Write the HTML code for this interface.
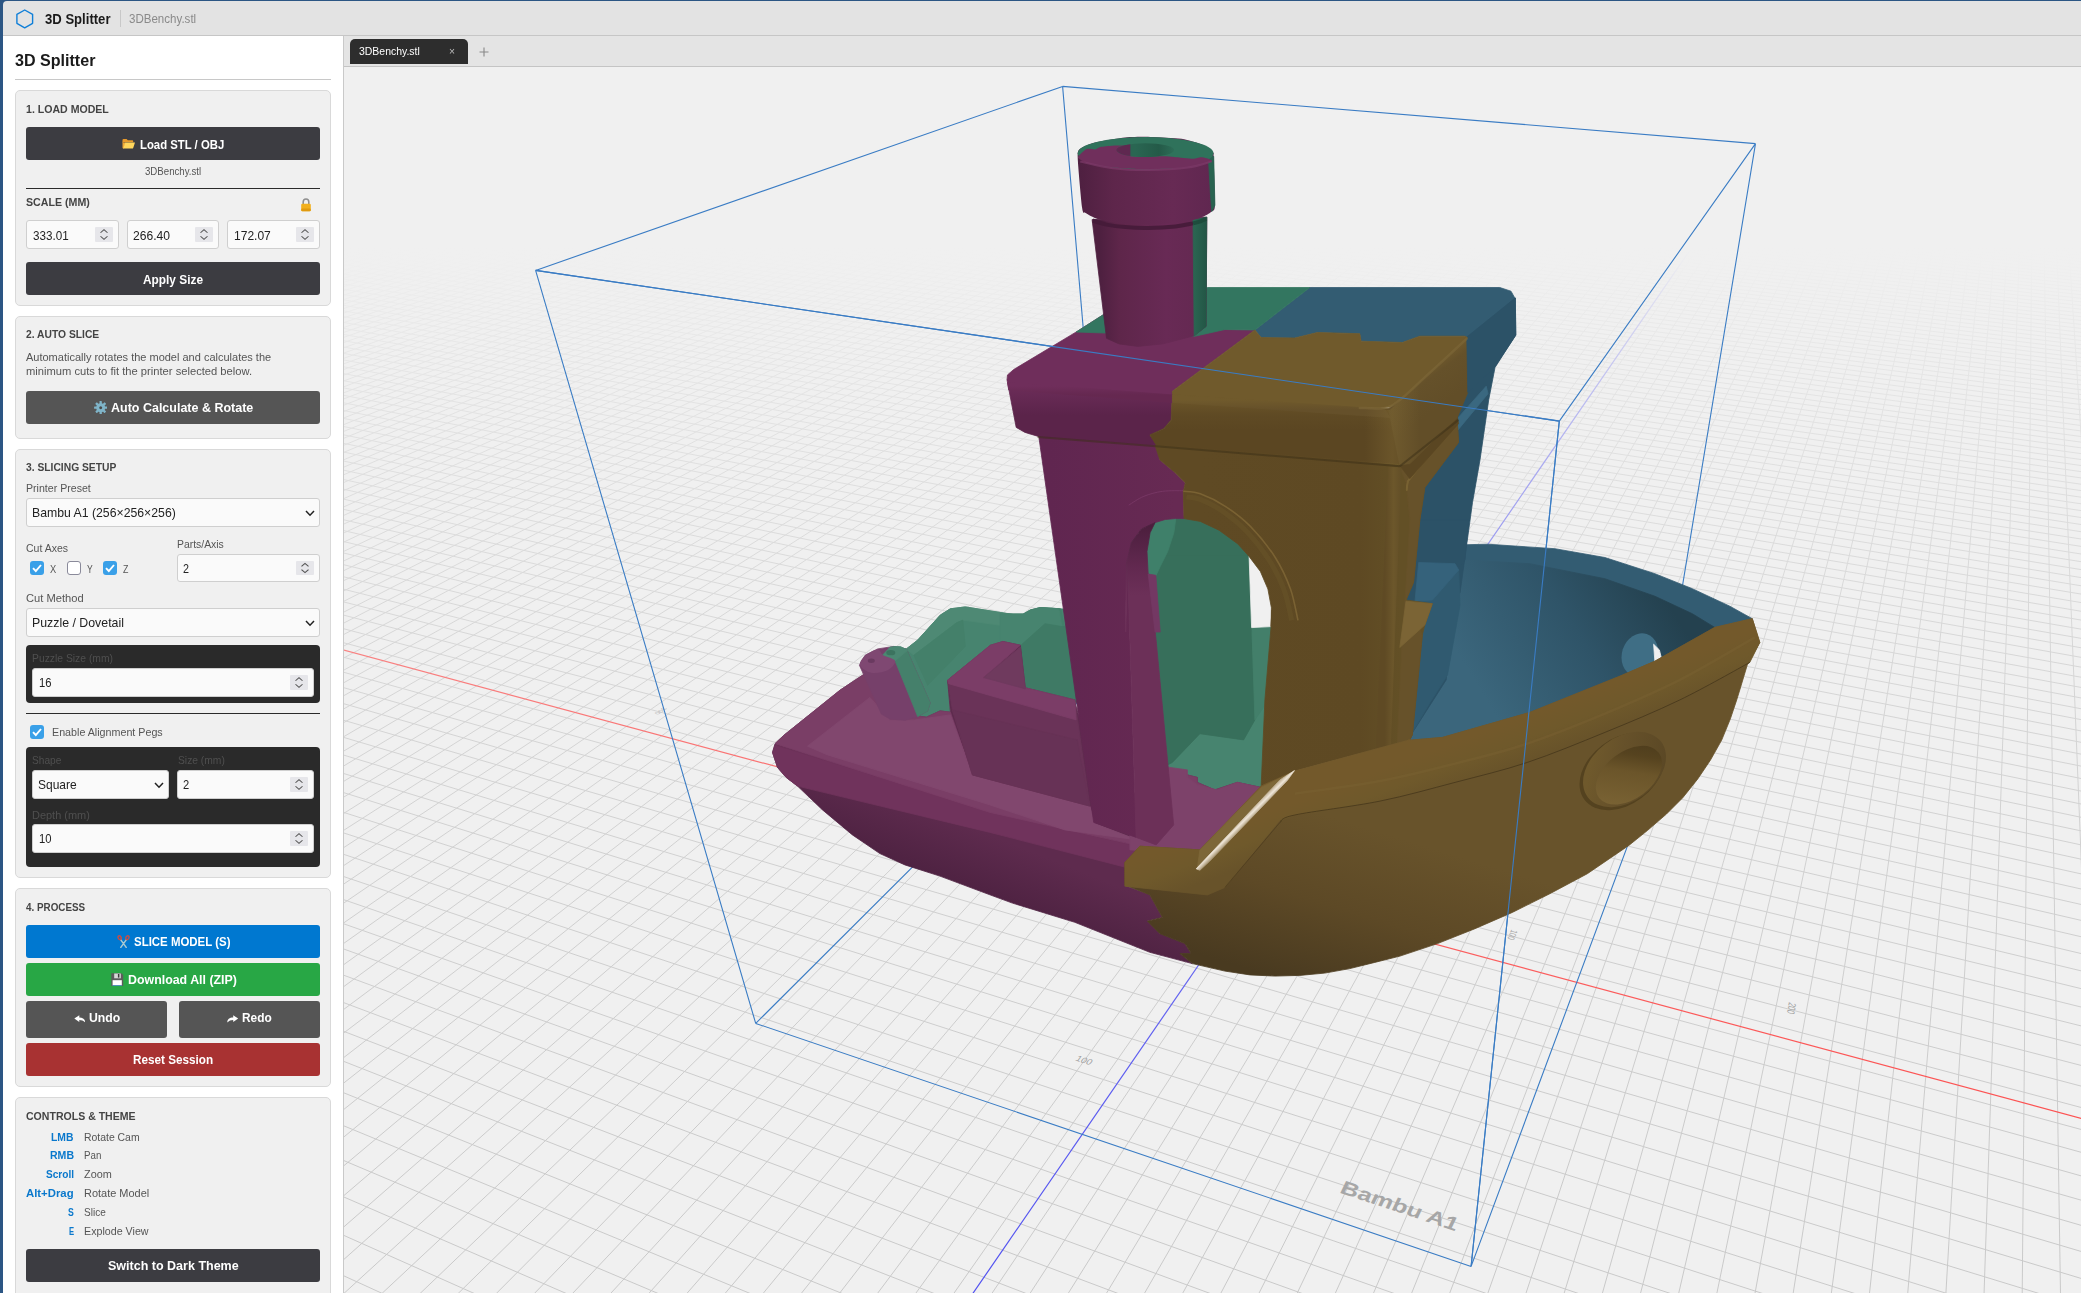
<!DOCTYPE html><html><head><meta charset="utf-8"><title>3D Splitter</title><style>
*{box-sizing:border-box;margin:0;padding:0}
html,body{width:2081px;height:1293px;overflow:hidden;background:#f0f0f0}
body{font-family:"Liberation Sans","DejaVu Sans",sans-serif;position:relative;color:#222}
.abs{position:absolute}
#ui{position:absolute;left:0;top:0;width:2081px;height:1293px;will-change:transform}
#frameL{left:0;top:0;width:4px;height:1293px;background:#2c5684}
#frameT{left:0;top:0;width:2081px;height:2px;background:#2c5684}
#title{left:3px;top:1px;width:2078px;height:35px;background:#e3e3e3;border-bottom:1px solid #c6c6c6;border-top-left-radius:4px}
#side{left:3px;top:36px;width:341px;height:1257px;background:#fff;border-right:1px solid #c9c9c9}
#tabbar{left:344px;top:36px;width:1737px;height:31px;background:#e4e4e4;border-bottom:1px solid #c4c4c4}
#tab{left:350px;top:39px;width:118px;height:25px;background:#2d2d2d;border-radius:5px 5px 0 0}
.t{position:absolute;white-space:nowrap;transform-origin:0 0}
.b{font-weight:bold}
.card{position:absolute;left:15px;width:316px;background:#f0f0f0;border:1px solid #d9d9d9;border-radius:5px}
.btn{position:absolute;border-radius:3px}
.inp{position:absolute;background:#fafafa;border:1px solid #cfcfcf;border-radius:3px}
.spin{position:absolute;right:5px;top:6px;width:18px;bottom:6px;background:#e6e6ea;border-radius:1px}
.hr{position:absolute;left:26px;width:294px;height:1px;background:#2a2a2a}
.dark{position:absolute;left:26px;width:294px;background:#2a2a2a;border-radius:4px}
.cb{position:absolute;width:14px;height:14px;border-radius:3px}
.cb.on{background:#3aa0e8}
.cb.off{background:#fff;border:1px solid #8a8a9a}
</style></head><body><svg class="abs" id="vp" style="left:344px;top:67px" width="1737" height="1226" viewBox="344 67 1737 1226">
<defs><linearGradient id="fog" x1="0" y1="0" x2="0" y2="1">
<stop offset="0.0000" stop-color="#f0f0f0" stop-opacity="1.000"/>
<stop offset="0.0122" stop-color="#f0f0f0" stop-opacity="1.000"/>
<stop offset="0.0245" stop-color="#f0f0f0" stop-opacity="1.000"/>
<stop offset="0.0367" stop-color="#f0f0f0" stop-opacity="1.000"/>
<stop offset="0.0489" stop-color="#f0f0f0" stop-opacity="1.000"/>
<stop offset="0.0612" stop-color="#f0f0f0" stop-opacity="1.000"/>
<stop offset="0.0734" stop-color="#f0f0f0" stop-opacity="1.000"/>
<stop offset="0.0856" stop-color="#f0f0f0" stop-opacity="1.000"/>
<stop offset="0.0979" stop-color="#f0f0f0" stop-opacity="1.000"/>
<stop offset="0.1101" stop-color="#f0f0f0" stop-opacity="1.000"/>
<stop offset="0.1223" stop-color="#f0f0f0" stop-opacity="1.000"/>
<stop offset="0.1346" stop-color="#f0f0f0" stop-opacity="1.000"/>
<stop offset="0.1468" stop-color="#f0f0f0" stop-opacity="1.000"/>
<stop offset="0.1591" stop-color="#f0f0f0" stop-opacity="0.982"/>
<stop offset="0.1713" stop-color="#f0f0f0" stop-opacity="0.945"/>
<stop offset="0.1835" stop-color="#f0f0f0" stop-opacity="0.911"/>
<stop offset="0.1958" stop-color="#f0f0f0" stop-opacity="0.878"/>
<stop offset="0.2080" stop-color="#f0f0f0" stop-opacity="0.847"/>
<stop offset="0.2202" stop-color="#f0f0f0" stop-opacity="0.817"/>
<stop offset="0.2325" stop-color="#f0f0f0" stop-opacity="0.789"/>
<stop offset="0.2447" stop-color="#f0f0f0" stop-opacity="0.763"/>
<stop offset="0.2569" stop-color="#f0f0f0" stop-opacity="0.737"/>
<stop offset="0.2692" stop-color="#f0f0f0" stop-opacity="0.713"/>
<stop offset="0.2814" stop-color="#f0f0f0" stop-opacity="0.690"/>
<stop offset="0.2936" stop-color="#f0f0f0" stop-opacity="0.668"/>
<stop offset="0.3059" stop-color="#f0f0f0" stop-opacity="0.647"/>
<stop offset="0.3181" stop-color="#f0f0f0" stop-opacity="0.626"/>
<stop offset="0.3303" stop-color="#f0f0f0" stop-opacity="0.607"/>
<stop offset="0.3426" stop-color="#f0f0f0" stop-opacity="0.588"/>
<stop offset="0.3548" stop-color="#f0f0f0" stop-opacity="0.570"/>
<stop offset="0.3670" stop-color="#f0f0f0" stop-opacity="0.553"/>
<stop offset="0.3793" stop-color="#f0f0f0" stop-opacity="0.537"/>
<stop offset="0.3915" stop-color="#f0f0f0" stop-opacity="0.521"/>
<stop offset="0.4038" stop-color="#f0f0f0" stop-opacity="0.505"/>
<stop offset="0.4160" stop-color="#f0f0f0" stop-opacity="0.491"/>
<stop offset="0.4282" stop-color="#f0f0f0" stop-opacity="0.476"/>
<stop offset="0.4405" stop-color="#f0f0f0" stop-opacity="0.463"/>
<stop offset="0.4527" stop-color="#f0f0f0" stop-opacity="0.449"/>
<stop offset="0.4649" stop-color="#f0f0f0" stop-opacity="0.437"/>
<stop offset="0.4772" stop-color="#f0f0f0" stop-opacity="0.424"/>
<stop offset="0.4894" stop-color="#f0f0f0" stop-opacity="0.412"/>
<stop offset="0.5016" stop-color="#f0f0f0" stop-opacity="0.401"/>
<stop offset="0.5139" stop-color="#f0f0f0" stop-opacity="0.389"/>
<stop offset="0.5261" stop-color="#f0f0f0" stop-opacity="0.378"/>
<stop offset="0.5383" stop-color="#f0f0f0" stop-opacity="0.368"/>
<stop offset="0.5506" stop-color="#f0f0f0" stop-opacity="0.358"/>
<stop offset="0.5628" stop-color="#f0f0f0" stop-opacity="0.348"/>
<stop offset="0.5750" stop-color="#f0f0f0" stop-opacity="0.338"/>
<stop offset="0.5873" stop-color="#f0f0f0" stop-opacity="0.329"/>
<stop offset="0.5995" stop-color="#f0f0f0" stop-opacity="0.320"/>
<stop offset="0.6117" stop-color="#f0f0f0" stop-opacity="0.311"/>
<stop offset="0.6240" stop-color="#f0f0f0" stop-opacity="0.302"/>
<stop offset="0.6362" stop-color="#f0f0f0" stop-opacity="0.294"/>
<stop offset="0.6485" stop-color="#f0f0f0" stop-opacity="0.286"/>
<stop offset="0.6607" stop-color="#f0f0f0" stop-opacity="0.278"/>
<stop offset="0.6729" stop-color="#f0f0f0" stop-opacity="0.270"/>
<stop offset="0.6852" stop-color="#f0f0f0" stop-opacity="0.263"/>
<stop offset="0.6974" stop-color="#f0f0f0" stop-opacity="0.255"/>
<stop offset="0.7096" stop-color="#f0f0f0" stop-opacity="0.248"/>
<stop offset="0.7219" stop-color="#f0f0f0" stop-opacity="0.241"/>
<stop offset="0.7341" stop-color="#f0f0f0" stop-opacity="0.234"/>
<stop offset="0.7463" stop-color="#f0f0f0" stop-opacity="0.228"/>
<stop offset="0.7586" stop-color="#f0f0f0" stop-opacity="0.221"/>
<stop offset="0.7708" stop-color="#f0f0f0" stop-opacity="0.215"/>
<stop offset="0.7830" stop-color="#f0f0f0" stop-opacity="0.209"/>
<stop offset="0.7953" stop-color="#f0f0f0" stop-opacity="0.203"/>
<stop offset="0.8075" stop-color="#f0f0f0" stop-opacity="0.197"/>
<stop offset="0.8197" stop-color="#f0f0f0" stop-opacity="0.191"/>
<stop offset="0.8320" stop-color="#f0f0f0" stop-opacity="0.186"/>
<stop offset="0.8442" stop-color="#f0f0f0" stop-opacity="0.180"/>
<stop offset="0.8564" stop-color="#f0f0f0" stop-opacity="0.175"/>
<stop offset="0.8687" stop-color="#f0f0f0" stop-opacity="0.170"/>
<stop offset="0.8809" stop-color="#f0f0f0" stop-opacity="0.164"/>
<stop offset="0.8931" stop-color="#f0f0f0" stop-opacity="0.159"/>
<stop offset="0.9054" stop-color="#f0f0f0" stop-opacity="0.154"/>
<stop offset="0.9176" stop-color="#f0f0f0" stop-opacity="0.150"/>
<stop offset="0.9299" stop-color="#f0f0f0" stop-opacity="0.145"/>
<stop offset="0.9421" stop-color="#f0f0f0" stop-opacity="0.140"/>
<stop offset="0.9543" stop-color="#f0f0f0" stop-opacity="0.136"/>
<stop offset="0.9666" stop-color="#f0f0f0" stop-opacity="0.131"/>
<stop offset="0.9788" stop-color="#f0f0f0" stop-opacity="0.127"/>
<stop offset="0.9910" stop-color="#f0f0f0" stop-opacity="0.123"/>
</linearGradient></defs>
<rect x="344" y="67" width="1737" height="1226" fill="#f0f0f0"/>
<path d="M350.5 245.4L342.0 247.9M2079.9 243.5L2083.0 243.8M362.7 245.4L342.0 251.5M2050.4 243.5L2083.0 246.7M375.0 245.3L342.0 255.3M2020.9 243.6L2083.0 249.7M387.3 245.3L342.0 259.0M1991.4 243.6L2083.0 252.6M399.6 245.3L342.0 262.9M1961.9 243.6L2083.0 255.7M411.8 245.3L342.0 266.7M1932.3 243.7L2083.0 258.7M424.1 245.3L342.0 270.7M1902.8 243.7L2083.0 261.8M436.4 245.3L342.0 274.7M1873.3 243.7L2083.0 264.9M448.7 245.3L342.0 278.8M1843.8 243.8L2083.0 268.1M460.9 245.2L342.0 282.9M1814.3 243.8L2083.0 271.3M473.2 245.2L342.0 287.1M1784.8 243.8L2083.0 274.6M485.5 245.2L342.0 291.4M1755.3 243.8L2083.0 277.8M497.7 245.2L342.0 295.7M1725.8 243.9L2083.0 281.2M510.0 245.2L342.0 300.1M1696.3 243.9L2083.0 284.5M522.3 245.2L342.0 304.6M1666.8 243.9L2083.0 288.0M534.6 245.2L342.0 309.1M1637.3 244.0L2083.0 291.4M546.8 245.2L342.0 313.7M1607.8 244.0L2083.0 294.9M559.1 245.1L342.0 318.4M1578.3 244.0L2083.0 298.5M571.4 245.1L342.0 323.2M1548.8 244.1L2083.0 302.0M583.7 245.1L342.0 328.1M1519.3 244.1L2083.0 305.7M595.9 245.1L342.0 333.0M1489.8 244.1L2083.0 309.4M608.2 245.1L342.0 338.0M1460.3 244.2L2083.0 313.1M620.5 245.1L342.0 343.2M1430.7 244.2L2083.0 316.9M632.7 245.1L342.0 348.4M1401.2 244.2L2083.0 320.7M645.0 245.0L342.0 353.7M1371.7 244.3L2083.0 324.6M657.3 245.0L342.0 359.0M1342.2 244.3L2083.0 328.6M669.6 245.0L342.0 364.5M1312.7 244.3L2083.0 332.5M681.8 245.0L342.0 370.1M1283.2 244.4L2083.0 336.6M694.1 245.0L342.0 375.8M1253.7 244.4L2083.0 340.7M706.4 245.0L342.0 381.6M1224.2 244.4L2083.0 344.9M718.7 245.0L342.0 387.5M1194.7 244.5L2083.0 349.1M730.9 245.0L342.0 393.5M1165.2 244.5L2083.0 353.4M743.2 244.9L342.0 399.6M1135.7 244.5L2083.0 357.7M755.5 244.9L342.0 405.9M1106.2 244.5L2083.0 362.1M767.7 244.9L342.0 412.2M1076.7 244.6L2083.0 366.6M780.0 244.9L342.0 418.7M1047.2 244.6L2083.0 371.1M792.3 244.9L342.0 425.3M1017.7 244.6L2083.0 375.7M804.6 244.9L342.0 432.1M988.2 244.7L2083.0 380.4M816.8 244.9L342.0 439.0M958.7 244.7L2083.0 385.1M829.1 244.8L342.0 446.0M929.1 244.7L2083.0 390.0M841.4 244.8L342.0 453.1M899.6 244.8L2083.0 394.8M853.6 244.8L342.0 460.5M870.1 244.8L2083.0 399.8M865.9 244.8L342.0 467.9M840.6 244.8L2083.0 404.8M878.2 244.8L342.0 475.5M811.1 244.9L2083.0 410.0M890.5 244.8L342.0 483.3M781.6 244.9L2083.0 415.1M902.7 244.8L342.0 491.3M752.1 244.9L2083.0 420.4M915.0 244.8L342.0 499.4M722.6 245.0L2083.0 425.8M927.3 244.7L342.0 507.7M693.1 245.0L2083.0 431.2M939.6 244.7L342.0 516.2M663.6 245.0L2083.0 436.8M951.8 244.7L342.0 524.9M634.1 245.1L2083.0 442.4M964.1 244.7L342.0 533.8M604.6 245.1L2083.0 448.1M976.4 244.7L342.0 542.9M575.1 245.1L2083.0 453.9M988.6 244.7L342.0 552.2M545.6 245.2L2083.0 459.8M1000.9 244.7L342.0 561.8M516.1 245.2L2083.0 465.8M1013.2 244.7L342.0 571.5M486.6 245.2L2083.0 471.9M1025.5 244.6L342.0 581.5M457.1 245.3L2083.0 478.2M1037.7 244.6L342.0 591.8M427.5 245.3L2083.0 484.5M1050.0 244.6L342.0 602.2M398.0 245.3L2083.0 490.9M1062.3 244.6L342.0 613.0M368.5 245.3L2083.0 497.5M1074.6 244.6L342.0 624.0M342.0 245.8L2083.0 504.1M1086.8 244.6L342.0 635.4M342.0 250.3L2083.0 510.9M1099.1 244.6L342.0 647.0M342.0 254.8L2083.0 517.8M1111.4 244.5L342.0 658.9M342.0 259.4L2083.0 524.8M1123.6 244.5L342.0 671.1M342.0 264.1L2083.0 532.0M1135.9 244.5L342.0 683.7M342.0 268.9L2083.0 539.3M1148.2 244.5L342.0 696.7M342.0 273.8L2083.0 546.7M1160.5 244.5L342.0 709.9M342.0 278.8L2083.0 554.3M1172.7 244.5L342.0 723.6M342.0 283.8L2083.0 562.0M1185.0 244.5L342.0 737.7M342.0 289.0L2083.0 569.9M1197.3 244.5L342.0 752.1M342.0 294.3L2083.0 577.9M1209.6 244.4L342.0 767.0M342.0 299.6L2083.0 586.1M1221.8 244.4L342.0 782.4M342.0 305.1L2083.0 594.4M1234.1 244.4L342.0 798.2M342.0 310.7L2083.0 602.9M1246.4 244.4L342.0 814.5M342.0 316.4L2083.0 611.6M1258.6 244.4L342.0 831.4M342.0 322.2L2083.0 620.4M1270.9 244.4L342.0 848.7M342.0 328.1L2083.0 629.5M1283.2 244.4L342.0 866.7M342.0 334.2L2083.0 638.7M1295.5 244.3L342.0 885.2M342.0 340.4L2083.0 648.1M1307.7 244.3L342.0 904.3M342.0 346.7L2083.0 657.7M1320.0 244.3L342.0 924.1M342.0 353.1L2083.0 667.5M1332.3 244.3L342.0 944.6M342.0 359.7L2083.0 677.6M1344.6 244.3L342.0 965.9M342.0 366.5L2083.0 687.8M1356.8 244.3L342.0 987.9M342.0 373.3L2083.0 698.3M1369.1 244.3L342.0 1010.7M342.0 380.4L2083.0 709.1M1381.4 244.3L342.0 1034.3M342.0 387.6L2083.0 720.0M1393.6 244.2L342.0 1058.9M342.0 395.0L2083.0 731.3M1405.9 244.2L342.0 1084.4M342.0 402.5L2083.0 742.7M1418.2 244.2L342.0 1110.9M342.0 410.2L2083.0 754.5M1430.5 244.2L342.0 1138.5M342.0 418.1L2083.0 766.5M1442.7 244.2L342.0 1167.3M342.0 426.2L2083.0 778.9M1455.0 244.2L342.0 1197.2M342.0 434.5L2083.0 791.5M1467.3 244.2L342.0 1228.5M342.0 443.0L2083.0 804.4M1479.5 244.1L342.0 1261.1M342.0 451.7L2083.0 817.7M1491.8 244.1L342.2 1295.0M342.0 460.7L2083.0 831.3M1504.1 244.1L380.3 1295.0M342.0 469.8L2083.0 845.3M1516.4 244.1L418.5 1295.0M342.0 479.2L2083.0 859.6M1528.6 244.1L456.6 1295.0M342.0 488.9L2083.0 874.3M1540.9 244.1L494.8 1295.0M342.0 498.8L2083.0 889.4M1553.2 244.1L532.9 1295.0M342.0 509.0L2083.0 904.9M1565.5 244.1L571.1 1295.0M342.0 519.4L2083.0 920.8M1577.7 244.0L609.2 1295.0M342.0 530.2L2083.0 937.2M1590.0 244.0L647.4 1295.0M342.0 541.2L2083.0 954.0M1602.3 244.0L685.5 1295.0M342.0 552.6L2083.0 971.3M1614.5 244.0L723.7 1295.0M342.0 564.3L2083.0 989.1M1626.8 244.0L761.8 1295.0M342.0 576.4L2083.0 1007.5M1639.1 244.0L800.0 1295.0M342.0 588.8L2083.0 1026.4M1651.4 244.0L838.2 1295.0M342.0 601.5L2083.0 1045.9M1663.6 243.9L876.3 1295.0M342.0 614.7L2083.0 1065.9M1675.9 243.9L914.5 1295.0M342.0 628.3L2083.0 1086.6M1688.2 243.9L952.7 1295.0M342.0 642.3L2083.0 1108.0M1700.5 243.9L990.8 1295.0M342.0 656.8L2083.0 1130.0M1712.7 243.9L1029.0 1295.0M342.0 671.8L2083.0 1152.8M1725.0 243.9L1067.2 1295.0M342.0 687.2L2083.0 1176.4M1737.3 243.9L1105.4 1295.0M342.0 703.2L2083.0 1200.7M1749.5 243.9L1143.5 1295.0M342.0 719.8L2083.0 1225.9M1761.8 243.8L1181.7 1295.0M342.0 736.9L2083.0 1252.0M1774.1 243.8L1219.9 1295.0M342.0 754.6L2083.0 1279.0M1786.4 243.8L1258.1 1295.0M342.0 773.0L2044.0 1295.0M1798.6 243.8L1296.3 1295.0M342.0 792.1L1951.8 1295.0M1810.9 243.8L1334.5 1295.0M342.0 811.9L1859.5 1295.0M1823.2 243.8L1372.7 1295.0M342.0 832.4L1767.3 1295.0M1835.5 243.8L1410.9 1295.0M342.0 853.8L1675.1 1295.0M1847.7 243.7L1449.0 1295.0M342.0 876.0L1583.0 1295.0M1860.0 243.7L1487.2 1295.0M342.0 899.1L1490.8 1295.0M1872.3 243.7L1525.4 1295.0M342.0 923.2L1398.6 1295.0M1884.5 243.7L1563.6 1295.0M342.0 948.4L1306.5 1295.0M1896.8 243.7L1601.9 1295.0M342.0 974.6L1214.4 1295.0M1909.1 243.7L1640.1 1295.0M342.0 1002.0L1122.2 1295.0M1921.4 243.7L1678.3 1295.0M342.0 1030.7L1030.1 1295.0M1933.6 243.7L1716.5 1295.0M342.0 1060.7L938.0 1295.0M1945.9 243.6L1754.7 1295.0M342.0 1092.1L846.0 1295.0M1958.2 243.6L1792.9 1295.0M342.0 1125.1L753.9 1295.0M1970.5 243.6L1831.1 1295.0M342.0 1159.8L661.8 1295.0M1982.7 243.6L1869.3 1295.0M342.0 1196.2L569.8 1295.0M1995.0 243.6L1907.6 1295.0M342.0 1234.6L477.7 1295.0M2007.3 243.6L1945.8 1295.0M342.0 1275.0L385.7 1295.0M2019.5 243.6L1984.0 1295.0M2031.8 243.6L2022.2 1295.0M2044.1 243.5L2060.5 1295.0M2056.4 243.5L2083.0 905.3M2068.6 243.5L2083.0 464.8M2080.9 243.5L2083.0 266.9" stroke="#c4c4c4" stroke-width="1" fill="none"/>
<path d="M342.0 649.5L2083.0 1118.9" stroke="#ff3030" stroke-width="1.2" fill="none"/>
<path d="M1694.3 243.9L971.8 1295.0" stroke="#3a3af0" stroke-width="1.2" fill="none"/>
<text transform="matrix(-1.5684 1.0975 -1.7238 -0.4532 658.65 710.47)" font-size="3.5" text-anchor="middle" fill="#8c8c8c" font-family="Liberation Sans, sans-serif">300</text>
<text transform="matrix(-1.4300 1.2090 -1.8991 -0.4993 839.67 758.06)" font-size="3.5" text-anchor="middle" fill="#8c8c8c" font-family="Liberation Sans, sans-serif">200</text>
<text transform="matrix(-1.2534 1.3383 -2.1027 -0.5528 1039.60 810.62)" font-size="3.5" text-anchor="middle" fill="#8c8c8c" font-family="Liberation Sans, sans-serif">100</text>
<text transform="matrix(-0.7400 1.6681 -2.6217 -0.6893 1509.44 934.15)" font-size="3.5" text-anchor="middle" fill="#8c8c8c" font-family="Liberation Sans, sans-serif">100</text>
<text transform="matrix(-0.3704 1.8809 -2.9565 -0.7773 1788.02 1007.39)" font-size="3.5" text-anchor="middle" fill="#8c8c8c" font-family="Liberation Sans, sans-serif">200</text>
<text transform="matrix(0.1066 2.1371 -3.3597 -0.8833 2103.39 1090.31)" font-size="3.5" text-anchor="middle" fill="#8c8c8c" font-family="Liberation Sans, sans-serif">300</text>
<text transform="matrix(1.7687 0.3215 -0.5643 0.7787 1448.05 558.21)" font-size="3.5" text-anchor="middle" fill="#8c8c8c" font-family="Liberation Sans, sans-serif">300</text>
<text transform="matrix(1.9287 0.3936 -0.6903 0.9526 1385.70 644.25)" font-size="3.5" text-anchor="middle" fill="#8c8c8c" font-family="Liberation Sans, sans-serif">200</text>
<text transform="matrix(2.1194 0.4928 -0.8638 1.1920 1308.56 750.68)" font-size="3.5" text-anchor="middle" fill="#8c8c8c" font-family="Liberation Sans, sans-serif">100</text>
<text transform="matrix(2.6322 0.8478 -1.4846 2.0487 1082.39 1062.79)" font-size="3.5" text-anchor="middle" fill="#8c8c8c" font-family="Liberation Sans, sans-serif">100</text>
<text transform="matrix(2.9824 1.1894 -2.0817 2.8727 906.89 1304.98)" font-size="3.5" text-anchor="middle" fill="#8c8c8c" font-family="Liberation Sans, sans-serif">200</text>
<text transform="matrix(3.3824 1.1263 -1.1929 2.4732 1338.87 1192.45)" font-size="7" font-weight="bold" fill="#9a9a9a" font-family="Liberation Sans, sans-serif">Bambu A1</text>
<rect x="344" y="67" width="1737" height="1226" fill="url(#fog)"/>
<path d="M535.6 270.4L1062.6 86.4M1062.6 86.4L1755.5 143.6M1755.5 143.6L1559.3 421.1M1559.3 421.1L535.6 270.4M535.6 270.4L755.7 1023.4M1062.6 86.4L1112.2 667.9M1755.5 143.6L1649.1 787.9M1559.3 421.1L1471.1 1266.4M755.7 1023.4L1471.1 1266.4M1471.1 1266.4L1649.1 787.9M1649.1 787.9L1112.2 667.9M1112.2 667.9L755.7 1023.4" stroke="#3a7cc4" stroke-width="1.1" fill="none"/>
<defs><linearGradient id="g1" gradientUnits="userSpaceOnUse" x1="1667.4" y1="602.5" x2="1492.4" y2="709.9"><stop offset="0" stop-color="#24414f"/><stop offset="0.45" stop-color="#2f5468"/><stop offset="1" stop-color="#3b667c"/></linearGradient><linearGradient id="g2" gradientUnits="userSpaceOnUse" x1="914.9" y1="804.9" x2="889.9" y2="867.4"><stop offset="0" stop-color="#5e2b4e"/><stop offset="1" stop-color="#4c2140"/></linearGradient><linearGradient id="g3" gradientUnits="userSpaceOnUse" x1="1050.0" y1="494.9" x2="1174.9" y2="494.9"><stop offset="0" stop-color="#602650"/><stop offset="1" stop-color="#672a53"/></linearGradient><linearGradient id="g4" gradientUnits="userSpaceOnUse" x1="1137.6" y1="526.4" x2="1137.6" y2="595.3"><stop offset="0" stop-color="#4c1f3e"/><stop offset="0.6" stop-color="#622950"/><stop offset="1" stop-color="#6c3058"/></linearGradient><linearGradient id="g5" gradientUnits="userSpaceOnUse" x1="1199.9" y1="494.9" x2="1399.8" y2="494.9"><stop offset="0" stop-color="#5f4a24"/><stop offset="0.8" stop-color="#5e4923"/><stop offset="1" stop-color="#635026"/></linearGradient><linearGradient id="g6" gradientUnits="userSpaceOnUse" x1="1384.8" y1="519.9" x2="1402.3" y2="519.9"><stop offset="0" stop-color="#5f4a24"/><stop offset="0.5" stop-color="#6c572b"/><stop offset="1" stop-color="#624e27"/></linearGradient><linearGradient id="g7" gradientUnits="userSpaceOnUse" x1="1075.0" y1="387.4" x2="1075.0" y2="414.9"><stop offset="0" stop-color="#6b2c58"/><stop offset="1" stop-color="#5b244a"/></linearGradient><linearGradient id="g8" gradientUnits="userSpaceOnUse" x1="1249.9" y1="399.9" x2="1249.9" y2="429.9"><stop offset="0" stop-color="#6b5529"/><stop offset="0.5" stop-color="#5f4a24"/><stop offset="1" stop-color="#5b4622"/></linearGradient><linearGradient id="g9" gradientUnits="userSpaceOnUse" x1="1412.3" y1="379.9" x2="1434.8" y2="409.9"><stop offset="0" stop-color="#6f592c"/><stop offset="0.25" stop-color="#65512a"/><stop offset="1" stop-color="#624e28"/></linearGradient><linearGradient id="g10" gradientUnits="userSpaceOnUse" x1="1075.0" y1="386.2" x2="1075.0" y2="394.9"><stop offset="0" stop-color="#6f2e5b"/><stop offset="1" stop-color="#652850"/></linearGradient><linearGradient id="g11" gradientUnits="userSpaceOnUse" x1="1249.9" y1="399.9" x2="1249.9" y2="409.9"><stop offset="0" stop-color="#705a2c"/><stop offset="1" stop-color="#65502a"/></linearGradient><linearGradient id="g12" gradientUnits="userSpaceOnUse" x1="1364.8" y1="432.4" x2="1419.8" y2="432.4"><stop offset="0" stop-color="#8a733a" stop-opacity="0"/><stop offset="0.5" stop-color="#8a733a" stop-opacity="0.33"/><stop offset="1" stop-color="#8a733a" stop-opacity="0"/></linearGradient><linearGradient id="g13" gradientUnits="userSpaceOnUse" x1="1100.3" y1="307.6" x2="1194.2" y2="307.6"><stop offset="0" stop-color="#4e2040"/><stop offset="0.2" stop-color="#5e264a"/><stop offset="0.7" stop-color="#682a55"/><stop offset="1" stop-color="#652952"/></linearGradient><linearGradient id="g14" gradientUnits="userSpaceOnUse" x1="1194.2" y1="307.6" x2="1206.1" y2="307.6"><stop offset="0" stop-color="#2a6551"/><stop offset="1" stop-color="#235646"/></linearGradient><linearGradient id="g15" gradientUnits="userSpaceOnUse" x1="1080.2" y1="182.7" x2="1213.0" y2="182.7"><stop offset="0" stop-color="#4f2041"/><stop offset="0.25" stop-color="#5e264b"/><stop offset="0.7" stop-color="#672a54"/><stop offset="1" stop-color="#602750"/></linearGradient><linearGradient id="g16" gradientUnits="userSpaceOnUse" x1="1135.4" y1="150.1" x2="1174.4" y2="150.1"><stop offset="0" stop-color="#2a6652"/><stop offset="0.6" stop-color="#245a48"/><stop offset="1" stop-color="#2d6d57"/></linearGradient><linearGradient id="g17" gradientUnits="userSpaceOnUse" x1="1324.8" y1="815.0" x2="1274.9" y2="977.4"><stop offset="0" stop-color="#68532b"/><stop offset="0.5" stop-color="#5d4926"/><stop offset="1" stop-color="#493a20"/></linearGradient><linearGradient id="g18" gradientUnits="userSpaceOnUse" x1="1554.9" y1="704.9" x2="1569.9" y2="744.9"><stop offset="0" stop-color="#73592b"/><stop offset="0.5" stop-color="#6f592b"/><stop offset="1" stop-color="#68532a"/></linearGradient><linearGradient id="g19" gradientUnits="userSpaceOnUse" x1="1239.9" y1="814.9" x2="1249.9" y2="824.9"><stop offset="0" stop-color="#8a7448"/><stop offset="0.5" stop-color="#efe6d8"/><stop offset="1" stop-color="#7a6436"/></linearGradient><linearGradient id="g20" gradientUnits="userSpaceOnUse" x1="1600.0" y1="745.0" x2="1650.0" y2="800.0"><stop offset="0" stop-color="#6f592c"/><stop offset="0.4" stop-color="#66512a"/><stop offset="1" stop-color="#5b4825"/></linearGradient><linearGradient id="g21" gradientUnits="userSpaceOnUse" x1="1605.0" y1="800.0" x2="1655.0" y2="752.0"><stop offset="0" stop-color="#7a6334"/><stop offset="0.55" stop-color="#6b552a"/><stop offset="0.8" stop-color="#56431f"/><stop offset="1" stop-color="#4e3d1d"/></linearGradient></defs><g id="boat"><polygon points="1455.0,545.0 1487.4,544.2 1554.9,548.7 1604.9,557.5 1654.9,573.7 1692.3,588.7 1729.8,606.2 1752.3,618.7 1714.8,627.4 1654.9,661.2 1619.9,676.2 1529.9,712.4 1442.5,737.4 1407.5,740.4 1405.0,669.9 1455.0,570.0" fill="#335c72" stroke="#335c72" stroke-width="0.8" stroke-linejoin="round" />
<polygon points="1466.2,560.0 1529.9,563.7 1604.9,578.7 1654.9,596.2 1692.3,613.7 1714.8,627.4 1654.9,661.2 1619.9,676.2 1529.9,712.4 1442.5,737.4 1407.5,740.4 1430.0,669.9 1455.0,595.0" fill="url(#g1)" stroke="url(#g1)" stroke-width="0.8" stroke-linejoin="round" />
<ellipse cx="1639.9" cy="654.9" rx="18" ry="22" fill="#3f6e85" transform="rotate(18 1639.9 654.9)"/>
<polygon points="1653.6,644.2 1659.4,649.9 1661.1,656.9 1654.9,661.9" fill="#f0f0f0" stroke="#f0f0f0" stroke-width="0.8" stroke-linejoin="round" />
<polygon points="1309.8,287.5 1499.8,287.5 1511.0,291.2 1515.2,298.7 1469.8,342.5 1464.8,336.2 1419.8,336.2 1402.3,342.5 1361.1,341.2 1359.8,333.7 1317.3,332.5 1294.9,338.0 1261.1,337.5 1254.9,330.0" fill="#335c72" stroke="#335c72" stroke-width="0.8" stroke-linejoin="round" />
<polygon points="1465.0,342.5 1515.4,298.0 1515.4,335.5 1495.0,367.5 1488.7,399.9 1480.0,459.9 1472.5,502.4 1467.0,542.4 1460.0,593.1 1400.0,593.1 1400.0,345.0" fill="#2c5267" stroke="#2c5267" stroke-width="0.8" stroke-linejoin="round" />
<polygon points="1360.0,520.0 1468.7,520.0 1466.2,545.0 1465.0,560.0 1455.0,572.5 1446.2,679.9 1407.5,740.4 1360.0,757.4" fill="#2c5267" stroke="#2c5267" stroke-width="0.8" stroke-linejoin="round" />
<polygon points="1415.0,602.5 1432.5,600.0 1458.7,570.0 1460.0,605.0 1447.5,674.9 1430.0,702.4 1408.7,738.6" fill="#305a70" stroke="#305a70" stroke-width="0.8" stroke-linejoin="round" />
<polygon points="1418.7,562.5 1455.0,563.7 1458.7,570.0 1432.5,600.0 1415.0,601.2" fill="#35627b" stroke="#35627b" stroke-width="0.8" stroke-linejoin="round" />
<polygon points="1456.2,419.9 1486.2,386.2 1488.0,393.7 1458.0,429.9" fill="#3a6880" stroke="#3a6880" stroke-width="0.8" stroke-linejoin="round" />
<polygon points="906.4,648.9 917.7,640.1 940.3,615.1 950.3,608.8 965.3,606.9 1020.5,615.7 1030.5,610.1 1040.5,607.5 1060.6,608.8 1078.1,610.1 1078.1,702.8 1025.5,689.0 1020.5,645.1 1002.9,641.4 990.4,645.1 947.8,680.2 950.3,712.2 940.3,710.9 926.5,717.2 917.7,715.9 895.1,660.2" fill="#47846f" stroke="#47846f" stroke-width="0.8" stroke-linejoin="round" />
<polygon points="917.7,640.1 940.3,615.1 950.3,608.8 965.3,606.9 1020.5,615.7 1007.9,626.3 962.8,620.1 956.5,622.8 913.9,655.2 906.4,648.9" fill="#4e8974" stroke="#4e8974" stroke-width="0.8" stroke-linejoin="round" />
<polygon points="956.5,622.8 962.8,620.1 965.3,646.4 927.7,685.2 913.9,655.2" fill="#44806a" stroke="#44806a" stroke-width="0.8" stroke-linejoin="round" />
<polygon points="1020.5,645.1 1045.5,623.2 1064.3,626.3 1078.1,702.8 1025.5,689.0" fill="#3b735f" stroke="#3b735f" stroke-width="0.8" stroke-linejoin="round" />
<polygon points="1020.5,615.7 1030.5,610.1 1040.5,607.5 1060.6,608.8 1064.3,626.3 1045.5,623.2 1020.5,645.1 1002.9,641.4 1007.9,626.3" fill="#42806a" stroke="#42806a" stroke-width="0.8" stroke-linejoin="round" />
<polygon points="1000.0,613.7 1023.7,613.7 1030.0,610.0 1040.0,607.5 1058.7,608.7 1075.0,699.9 1025.0,688.7 1021.2,645.0 1000.0,662.4" fill="#47846f" stroke="#47846f" stroke-width="0.8" stroke-linejoin="round" />
<polygon points="1021.2,645.0 1045.0,623.7 1067.5,627.5 1075.0,699.9 1025.0,688.7" fill="#3f7a65" stroke="#3f7a65" stroke-width="0.8" stroke-linejoin="round" />
<polygon points="1124.9,535.0 1252.4,535.0 1272.4,610.0 1268.6,699.9 1264.9,786.1 1224.9,809.9 1149.9,834.9 1124.9,575.0" fill="#47846f" stroke="#47846f" stroke-width="0.8" stroke-linejoin="round" />
<polygon points="1153.9,516.4 1252.9,516.4 1252.3,632.0 1153.9,632.0" fill="#376f5b" stroke="#376f5b" stroke-width="0.8" stroke-linejoin="round" />
<polygon points="1144.9,570.0 1162.4,555.0 1248.6,555.0 1254.9,719.9 1243.6,739.9 1199.9,733.7 1172.4,762.4 1162.4,767.4" fill="#376f5b" stroke="#376f5b" stroke-width="0.8" stroke-linejoin="round" />
<polygon points="1251.9,627.5 1272.4,626.2 1268.6,699.9 1254.9,719.9" fill="#437f6a" stroke="#437f6a" stroke-width="0.8" stroke-linejoin="round" />
<polygon points="1249.1,556.5 1260.4,571.5 1267.9,589.0 1271.4,607.8 1271.1,626.6 1251.6,627.6" fill="#f0f0f0" stroke="#f0f0f0" stroke-width="0.8" stroke-linejoin="round" />
<polygon points="1142.6,576.5 1142.6,545.2 1147.6,523.9 1165.2,518.2 1175.8,518.2 1173.9,532.7 1167.7,551.5 1160.2,566.5 1155.8,575.9" fill="#3f806a" stroke="#3f806a" stroke-width="0.8" stroke-linejoin="round" />
<polygon points="772.5,752.4 775.0,743.7 783.7,735.4 840.0,690.2 864.9,673.7 917.7,715.9 926.4,717.2 940.1,710.9 950.4,712.2 947.6,680.2 990.4,645.2 1002.9,641.5 1020.4,645.2 1025.4,688.9 1074.3,700.2 1089.8,754.9 1174.8,827.4 1187.3,774.9 1197.3,777.4 1197.3,782.4 1214.8,789.9 1237.3,782.4 1261.0,787.4 1129.8,862.4 1126.1,886.1 1149.8,894.8 1162.3,917.3 1147.3,921.1 1159.8,933.6 1184.8,943.6 1191.0,953.6 1179.8,953.6 1192.3,963.6 1149.8,952.3 1074.8,922.3 1012.4,903.1 989.9,894.8 939.9,876.1 904.9,864.9 879.9,853.6 852.4,834.9 822.5,809.9 797.5,786.1 786.2,777.4 777.5,767.4" fill="url(#g2)" stroke="url(#g2)" stroke-width="0.8" stroke-linejoin="round" />
<polygon points="772.5,752.4 775.0,744.9 989.9,811.1 1137.3,846.1 1126.1,867.4 989.9,832.4 797.5,786.1 786.2,777.4 777.5,767.4" fill="#70335c" stroke="#70335c" stroke-width="0.8" stroke-linejoin="round" />
<polygon points="775.0,743.7 783.7,735.4 840.0,690.2 864.9,673.7 917.7,715.9 926.4,717.2 940.1,710.9 950.4,712.2 972.4,774.9 1089.8,806.1 1094.8,823.6 1137.3,839.9 1159.8,844.9 1174.8,827.4 1187.3,774.9 1197.3,777.4 1197.3,782.4 1214.8,789.9 1237.3,782.4 1261.0,787.4 1139.8,846.1 989.9,812.4" fill="#7a3e66" stroke="#7a3e66" stroke-width="0.8" stroke-linejoin="round" />
<polygon points="807.5,746.2 869.9,697.4 889.9,719.9 914.9,719.9 950.4,714.9 972.4,774.9 1089.8,806.1 1094.8,823.6 1137.3,839.9 1064.8,829.9 989.9,804.9 827.5,754.9" fill="#81476e" stroke="#81476e" stroke-width="0.8" stroke-linejoin="round" />
<polygon points="947.6,680.2 983.6,677.5 1074.8,699.9 1089.8,806.1 972.4,774.9 952.4,709.9" fill="#6a3358" stroke="#6a3358" stroke-width="0.8" stroke-linejoin="round" />
<polygon points="952.4,709.9 1077.3,739.9 1089.8,806.1 972.4,774.9" fill="#673256" stroke="#673256" stroke-width="0.8" stroke-linejoin="round" />
<polygon points="947.6,680.2 990.4,645.2 1002.9,641.5 1020.4,645.2 983.6,677.5 1074.8,699.9 1076.1,719.9 948.6,683.7" fill="#7b3d67" stroke="#7b3d67" stroke-width="0.8" stroke-linejoin="round" />
<polygon points="983.6,677.5 1020.4,647.0 1025.4,688.9" fill="#6f3a5e" stroke="#6f3a5e" stroke-width="0.8" stroke-linejoin="round" />
<polygon points="859.4,665.2 865.1,655.2 877.6,648.9 893.9,646.4 906.4,648.9 930.2,702.8 927.7,710.9 917.7,716.6 905.2,720.3 890.1,719.1 881.4,714.1" fill="#76406a" stroke="#76406a" stroke-width="0.8" stroke-linejoin="round" />
<polygon points="882.6,655.2 893.9,646.4 906.4,648.9 930.2,702.8 927.7,710.9 917.7,716.6 895.1,660.8" fill="#45806b" stroke="#45806b" stroke-width="0.8" stroke-linejoin="round" />
<polygon points="882.6,655.2 895.1,660.8 907.7,650.2 900.2,646.4 890.1,647.0" fill="#4b8772" stroke="#4b8772" stroke-width="0.8" stroke-linejoin="round" />
<path d="M860.1 665.2C859.0 662.4 862.1 658.4 865.1 655.8C868.0 653.2 874.6 649.6 877.6 649.5C880.6 649.4 880.3 653.3 883.2 655.2C886.2 657.0 894.4 658.3 895.1 660.8C895.9 663.3 891.6 668.2 887.6 670.2C883.7 672.2 875.9 673.5 871.3 672.7C866.7 671.9 861.1 668.0 860.1 665.2Z" fill="#7f4872" />
<ellipse cx="890.8" cy="652.7" rx="4.5" ry="2.6" fill="#3c735f"/>
<ellipse cx="871.3" cy="660.8" rx="3.5" ry="2.2" fill="#6a3a60"/>
<polygon points="1149.9,764.9 1169.9,767.4 1187.4,769.9 1187.4,777.4 1197.4,784.9 1217.4,789.9 1237.4,782.4 1259.9,787.4 1263.6,791.1 1221.1,851.1 1199.9,853.6 1129.9,849.9 1129.9,832.4" fill="#7d426a" stroke="#7d426a" stroke-width="0.8" stroke-linejoin="round" />
<polygon points="1037.5,427.4 1156.2,437.4 1159.9,459.9 1174.9,472.4 1184.9,482.4 1185.2,483.2 1183.3,491.9 1184.0,518.6 1175.2,518.6 1165.2,519.5 1155.1,522.6 1141.4,528.9 1131.3,542.7 1126.3,564.0 1125.7,632.0 1127.4,560.0 1136.2,837.4 1093.7,822.4" fill="url(#g3)" stroke="url(#g3)" stroke-width="0.8" stroke-linejoin="round" />
<polygon points="1155.1,522.6 1150.1,532.7 1147.0,551.5 1148.2,574.0 1149.9,575.0 1173.7,824.9 1156.2,844.9 1136.2,837.4 1127.4,560.0 1125.7,632.0 1126.3,564.0 1131.3,542.7 1141.4,528.9" fill="url(#g4)" stroke="url(#g4)" stroke-width="0.8" stroke-linejoin="round" />
<polygon points="1148.2,574.0 1155.8,575.3 1160.2,632.0 1155.1,632.0" fill="#733863" stroke="#733863" stroke-width="0.8" stroke-linejoin="round" />
<path d="M1183.3 490.7C1179.9 490.8 1169.2 490.4 1162.7 491.3C1156.1 492.2 1149.5 494.0 1143.9 496.3C1138.2 498.6 1131.3 503.6 1128.8 505.1" fill="none" stroke="#7a3a68" stroke-width="1" stroke-opacity="0.8"/>
<polygon points="1149.9,429.9 1156.2,437.4 1399.8,457.4 1409.8,477.4 1457.3,422.4 1458.5,442.4 1424.8,487.4 1419.8,519.9 1413.5,582.3 1406.0,600.0 1432.3,603.7 1424.8,625.0 1422.3,635.0 1412.3,734.9 1409.8,739.9 1294.9,771.1 1261.1,787.4 1264.9,699.9 1271.1,626.2 1271.9,610.0 1271.1,626.6 1271.4,607.8 1267.9,589.0 1260.4,571.5 1249.1,556.5 1237.8,543.9 1219.0,530.2 1200.3,521.4 1184.0,518.6 1183.3,491.9 1185.2,483.2 1184.9,482.4 1174.9,472.4 1159.9,459.9" fill="url(#g5)" stroke="url(#g5)" stroke-width="0.8" stroke-linejoin="round" />
<polygon points="1399.8,467.4 1409.8,477.4 1457.3,422.4 1458.5,442.4 1424.8,487.4 1419.8,519.9 1413.5,582.3 1406.0,600.0 1422.3,635.0 1412.3,734.9 1409.8,739.9 1397.3,743.7 1402.3,635.0 1406.0,585.0 1409.8,519.9 1406.0,482.4" fill="#67522a" stroke="#67522a" stroke-width="0.8" stroke-linejoin="round" />
<polygon points="1406.0,601.2 1432.3,603.7 1424.8,625.0 1399.8,647.5" fill="#7b6435" stroke="#7b6435" stroke-width="0.8" stroke-linejoin="round" />
<polygon points="1388.6,466.9 1401.0,467.9 1390.3,746.2 1376.1,749.2" fill="url(#g6)" stroke="url(#g6)" stroke-width="0.8" stroke-linejoin="round" />
<path d="M1406.8 489.9C1407.0 488.6 1406.8 484.9 1407.8 482.4C1408.8 479.9 1405.0 484.8 1412.8 474.9C1420.6 465.0 1447.8 431.6 1454.8 422.9" fill="none" stroke="#7d6635" stroke-width="2" stroke-opacity="0.8" stroke-linecap="round"/>
<path d="M1186.5 496.9C1188.8 497.4 1194.2 497.0 1200.3 499.4C1206.3 501.9 1215.1 506.0 1222.8 511.4C1230.5 516.7 1238.9 523.3 1246.6 531.4C1254.3 539.5 1262.9 550.4 1269.2 560.2C1275.4 570.0 1280.5 580.3 1284.2 590.3C1288.0 600.3 1290.5 615.4 1291.7 620.4" fill="none" stroke="#6b562a" stroke-width="5" stroke-opacity="0.45"/>
<path d="M1183.3 491.3C1186.2 491.7 1193.3 491.3 1200.3 493.8C1207.2 496.3 1217.0 500.9 1225.3 506.3C1233.7 511.8 1242.0 517.8 1250.4 526.4C1258.7 535.0 1268.8 547.3 1275.4 557.7C1282.1 568.2 1286.7 578.6 1290.5 589.0C1294.2 599.5 1296.7 615.2 1298.0 620.4" fill="none" stroke="#7a6233" stroke-width="1.6"/>
<polygon points="1007.0,379.9 1172.4,392.4 1171.2,419.9 1163.7,428.7 1149.9,434.9 1156.2,444.9 1037.5,436.2 1025.0,432.4 1016.2,427.4" fill="url(#g7)" stroke="url(#g7)" stroke-width="0.8" stroke-linejoin="round" />
<polygon points="1172.4,392.4 1389.8,408.7 1399.8,463.7 1156.2,444.9 1149.9,434.9 1163.7,428.7 1171.2,419.9" fill="url(#g8)" stroke="url(#g8)" stroke-width="0.8" stroke-linejoin="round" />
<polygon points="1398.6,463.7 1409.8,478.6 1458.5,423.7 1457.3,416.2 1409.8,462.4" fill="#5a4622" stroke="#5a4622" stroke-width="0.8" stroke-linejoin="round" />
<polygon points="1388.6,408.7 1466.8,337.0 1467.8,392.4 1457.3,417.4 1409.8,463.7 1399.8,464.9" fill="url(#g9)" stroke="url(#g9)" stroke-width="0.8" stroke-linejoin="round" />
<polygon points="1466.8,337.0 1515.2,298.0 1516.0,335.0 1493.5,368.7 1467.8,392.4" fill="#2c5267" stroke="#2c5267" stroke-width="0.8" stroke-linejoin="round" />
<polygon points="1010.0,383.2 1007.0,379.9 1007.5,374.9 1013.7,369.5 1077.5,331.2 1104.9,313.7 1199.9,313.7 1224.9,329.5 1254.9,330.0 1172.4,391.2 1172.4,394.9 1075.0,387.4" fill="#6f2e5b" stroke="#6f2e5b" stroke-width="0.8" stroke-linejoin="round" />
<polygon points="1076.2,332.0 1104.9,313.7 1207.4,287.5 1309.8,287.5 1254.9,330.0 1224.9,329.5 1194.9,336.2 1104.9,333.0" fill="#337660" stroke="#337660" stroke-width="0.8" stroke-linejoin="round" />
<polygon points="1254.9,330.0 1261.1,337.5 1294.9,338.0 1317.3,332.5 1359.8,333.7 1361.1,341.2 1402.3,342.5 1419.8,336.2 1464.8,336.2 1467.3,337.5 1402.3,398.7 1389.8,406.9 1372.3,408.7 1172.4,394.9 1172.4,391.2" fill="#705a2c" stroke="#705a2c" stroke-width="0.8" stroke-linejoin="round" />
<polygon points="1007.5,382.4 1172.4,394.9 1172.4,402.4 1008.7,389.9" fill="url(#g10)" stroke="url(#g10)" stroke-width="0.8" stroke-linejoin="round" />
<polygon points="1172.4,394.9 1384.8,409.2 1389.8,417.4 1172.4,402.4" fill="url(#g11)" stroke="url(#g11)" stroke-width="0.8" stroke-linejoin="round" />
<polygon points="1364.8,407.9 1389.8,409.9 1419.8,382.4 1419.8,454.9 1409.8,463.7 1399.8,464.9 1364.8,461.9" fill="url(#g12)" stroke="url(#g12)" stroke-width="0.8" stroke-linejoin="round" stroke-opacity="0"/>
<path d="M1466.8 338.7C1459.8 345.2 1435.9 367.2 1424.8 377.4C1413.6 387.6 1406.5 394.9 1399.8 399.9C1393.1 405.0 1391.5 406.6 1384.8 407.9C1378.1 409.3 1364.0 407.9 1359.8 407.9" fill="none" stroke="#80693a" stroke-width="2.5" stroke-opacity="0.55" stroke-linecap="round"/>
<path d="M1037.5 436.9L1156.2 446.2L1399.8 466.2L1458.5 419.9" fill="none" stroke="#3a2d16" stroke-width="2" stroke-opacity="0.5"/>
<polygon points="1092.1,219.6 1206.8,217.1 1206.1,326.4 1194.2,335.8 1162.9,343.9 1137.8,346.4 1119.0,343.9 1106.5,338.3" fill="url(#g13)" stroke="url(#g13)" stroke-width="0.8" stroke-linejoin="round" />
<polygon points="1193.0,220.3 1206.8,217.1 1206.1,326.4 1194.2,335.8" fill="url(#g14)" stroke="url(#g14)" stroke-width="0.8" stroke-linejoin="round" />
<path d="M1092.7 220.5C1095.0 221.2 1101.1 223.5 1106.5 224.6C1111.9 225.7 1118.4 226.6 1125.3 227.1C1132.2 227.7 1139.5 228.1 1147.9 228.0C1156.2 227.9 1167.9 227.3 1175.4 226.5C1183.0 225.7 1190.1 223.9 1193.0 223.4" fill="none" stroke="#451b39" stroke-width="4" stroke-opacity="0.9"/>
<path d="M1193.0 223.4C1194.2 223.0 1198.3 222.0 1200.5 221.3C1202.7 220.5 1205.3 219.2 1206.3 218.7" fill="none" stroke="#1d4a3b" stroke-width="4" stroke-opacity="0.9"/>
<path d="M1077.7 157.6C1077.5 150.7 1078.2 150.6 1080.2 148.8C1082.2 147.1 1090.0 143.9 1095.2 142.6C1100.5 141.2 1118.9 138.2 1125.3 137.5C1131.7 136.9 1143.8 136.8 1150.4 136.9C1157.0 137.1 1175.6 137.8 1181.7 138.8C1187.8 139.7 1199.4 143.5 1203.0 145.1C1206.7 146.7 1211.8 151.1 1213.0 152.6C1214.3 154.0 1213.4 151.5 1213.7 157.6C1213.9 163.7 1215.1 198.9 1214.9 205.2C1214.7 211.5 1213.5 210.0 1211.8 211.5C1210.1 212.9 1204.7 216.4 1200.5 217.7C1196.3 219.1 1181.6 222.0 1175.4 222.8C1169.3 223.6 1154.4 224.6 1147.9 224.6C1141.3 224.7 1124.9 224.0 1119.0 223.4C1113.2 222.7 1101.7 220.2 1097.7 219.0C1093.8 217.8 1087.0 214.0 1085.2 212.7C1083.4 211.4 1083.0 214.2 1082.1 207.7C1081.2 201.3 1077.9 164.5 1077.7 157.6Z" fill="url(#g15)" />
<polygon points="1206.8,158.2 1213.7,156.3 1214.9,205.2 1211.8,211.5 1210.5,195.2 1208.6,161.4" fill="#286350" stroke="#286350" stroke-width="0.8" stroke-linejoin="round" />
<ellipse cx="1145.6" cy="153.2" rx="67.9" ry="16.3" fill="#2f725b"/>
<path d="M1077.9 157.6C1077.8 156.2 1084.7 149.9 1086.5 149.1C1088.2 148.3 1093.9 149.7 1095.2 149.4C1096.6 149.2 1098.5 147.3 1100.3 146.9C1102.0 146.6 1109.9 145.8 1112.8 145.7C1115.7 145.6 1127.3 145.3 1129.1 146.3C1130.8 147.4 1126.9 155.3 1130.3 156.3C1133.7 157.3 1158.5 156.3 1162.9 156.3C1167.3 156.4 1171.2 156.7 1174.2 157.0C1177.2 157.2 1190.4 158.8 1193.0 158.8C1195.6 158.9 1199.1 157.3 1200.5 157.2C1201.9 157.2 1205.6 157.8 1206.8 158.2C1207.9 158.6 1213.7 160.5 1211.8 161.4C1209.9 162.2 1194.4 166.2 1188.0 167.0C1181.6 167.8 1155.4 169.4 1147.9 169.5C1140.4 169.6 1118.8 168.2 1112.8 167.6C1106.8 167.0 1091.2 164.2 1087.7 163.2C1084.2 162.2 1078.1 159.0 1077.9 157.6Z" fill="#702f5c" />
<ellipse cx="1145.4" cy="150.1" rx="28.8" ry="6.9" fill="url(#g16)"/>
<path d="M1130.4 144.2 A28.8 6.9 0 0 0 1130.4 156.0 Z" fill="#5f2850" />
<path d="M1080.2 161.4C1085.6 162.5 1101.5 166.8 1112.8 168.2C1124.1 169.7 1135.3 170.2 1147.9 170.1C1160.4 170.0 1177.3 169.1 1188.0 167.6C1198.6 166.2 1207.8 162.4 1211.8 161.4" fill="none" stroke="#7d3a69" stroke-width="2" stroke-opacity="0.7"/>
<polygon points="1261.1,786.1 1294.9,771.1 1409.8,739.9 1407.5,740.4 1442.5,737.4 1529.9,712.4 1619.9,676.2 1654.9,661.2 1714.8,627.4 1752.3,618.7 1759.8,642.4 1747.3,664.9 1739.8,689.9 1736.7,700.0 1730.4,718.8 1721.7,740.1 1710.4,760.2 1697.8,778.9 1682.8,797.7 1666.5,814.0 1647.7,830.3 1628.9,845.4 1587.4,873.7 1549.9,893.7 1512.4,912.4 1475.0,928.7 1437.5,943.6 1400.0,956.1 1374.8,962.4 1349.8,968.6 1324.8,973.1 1299.9,975.4 1274.9,976.1 1249.9,974.9 1224.9,971.1 1192.4,963.6 1179.9,953.6 1191.2,953.6 1184.9,943.6 1159.9,933.7 1147.4,921.2 1162.4,917.4 1149.9,894.9 1124.9,884.9 1124.9,862.4 1139.9,846.2 1199.9,849.9 1261.1,787.5" fill="url(#g17)" stroke="url(#g17)" stroke-width="0.8" stroke-linejoin="round" />
<polygon points="1261.1,786.1 1294.9,771.1 1409.8,739.9 1407.5,740.4 1442.5,737.4 1529.9,712.4 1619.9,676.2 1654.9,661.2 1714.8,627.4 1752.3,618.7 1759.8,642.4 1749.8,662.4 1679.9,699.9 1604.9,732.4 1527.4,762.4 1455.0,782.4 1380.0,801.1 1294.9,815.0 1279.9,820.0 1224.9,887.4 1207.4,894.9 1124.9,886.2 1124.9,862.4 1139.9,846.2 1199.9,849.9" fill="url(#g18)" stroke="url(#g18)" stroke-width="0.8" stroke-linejoin="round" />
<path d="M1754.8 637.4C1742.3 644.5 1704.8 667.2 1679.9 679.9C1654.9 692.6 1630.3 703.0 1604.9 713.7C1579.5 724.3 1552.4 735.3 1527.4 743.6C1502.4 752.0 1479.5 757.4 1455.0 763.6C1430.4 769.9 1406.7 776.1 1380.0 781.1C1353.3 786.1 1309.0 791.6 1294.9 793.7" fill="none" stroke="#7a6232" stroke-width="2.5" stroke-opacity="0.45"/>
<path d="M1749.8 662.4C1738.2 668.7 1704.0 688.2 1679.9 699.9C1655.7 711.6 1630.3 722.0 1604.9 732.4C1579.5 742.8 1552.4 754.0 1527.4 762.4C1502.4 770.7 1479.5 775.9 1455.0 782.4C1430.4 788.8 1406.7 795.7 1380.0 801.1C1353.3 806.5 1311.5 811.4 1294.9 815.0C1278.2 818.5 1282.4 821.2 1279.9 822.5" fill="none" stroke="#43341a" stroke-width="1" stroke-opacity="0.75"/>
<path d="M1279.9 822.5L1224.9 887.4" fill="none" stroke="#43341a" stroke-width="1" stroke-opacity="0.5"/>
<polygon points="1199.9,849.9 1261.1,787.4 1294.9,771.1 1281.1,778.6 1197.4,867.8" fill="#7d6738" stroke="#7d6738" stroke-width="0.8" stroke-linejoin="round" />
<polygon points="1196.2,868.8 1279.9,779.9 1294.4,770.6 1287.4,780.4 1209.9,861.1 1199.9,870.3" fill="url(#g19)" stroke="url(#g19)" stroke-width="0.8" stroke-linejoin="round" />
<ellipse cx="1622.0" cy="771.5" rx="47" ry="33" fill="#54421f" transform="rotate(-37 1622.0 771.5)"/>
<ellipse cx="1624.5" cy="769.5" rx="46" ry="32" fill="url(#g20)" transform="rotate(-37 1624.5 769.5)"/>
<ellipse cx="1628.9" cy="775.2" rx="37.5" ry="23.5" fill="url(#g21)" transform="rotate(-37 1628.9 775.2)"/></g>
<path d="M1559.3 421.1L535.6 270.4M1559.3 421.1L1471.1 1266.4" stroke="#3a7cc4" stroke-width="1.1" fill="none"/>
</svg><div id="ui"><div class="abs" id="frameT"></div><div class="abs" id="frameL"></div>
<div class="abs" id="title"></div>
<svg class="abs" style="left:14px;top:8px" width="22" height="22" viewBox="0 0 22 22"><path d="M10.7 2 L18.6 6.4 L18.6 15.3 L10.7 19.8 L2.9 15.3 L2.9 6.4 Z" fill="none" stroke="#0f7fd8" stroke-width="1.4" stroke-linejoin="round"/></svg>
<div class="t b" style="left:44.5px;top:12.4px;font-size:14.24px;line-height:14.24px;color:#1a1a1a;transform:scaleX(0.9200)">3D Splitter</div>
<div class="abs" style="left:120px;top:10px;width:1px;height:17px;background:#c8c8c8"></div>
<div class="t" style="left:129.0px;top:13.4px;font-size:12.56px;line-height:12.56px;color:#8a8a8a;transform:scaleX(0.9200)">3DBenchy.stl</div>
<div class="abs" id="side"></div>
<div class="abs" id="tabbar"></div><div class="abs" id="tab"></div>
<div class="t" style="left:359.4px;top:45.0px;font-size:11.61px;line-height:11.61px;color:#fff;transform:scaleX(0.9000)">3DBenchy.stl</div>
<div class="t" style="left:449.0px;top:45.7px;font-size:11.00px;line-height:11.00px;color:#bbb;transform:scaleX(0.9340)">×</div>
<svg class="abs" style="left:478px;top:46px" width="12" height="12" viewBox="0 0 12 12"><path d="M6 1.5 V10.5 M1.5 6 H10.5" stroke="#888" stroke-width="1.1"/></svg>
<div class="t b" style="left:15.2px;top:52.7px;font-size:15.60px;line-height:15.60px;color:#1a1a1a;transform:scaleX(1.0312)">3D Splitter</div>
<div class="abs" style="left:15px;top:79px;width:316px;height:1px;background:#c8c8c8"></div>
<div class="card" style="top:90px;height:216px"></div>
<div class="t b" style="left:26.2px;top:104.0px;font-size:11.50px;line-height:11.50px;color:#444;transform:scaleX(0.9191)">1. LOAD MODEL</div>
<div class="btn" style="left:26px;top:127px;width:294px;height:33px;background:#3c3c41"></div>
<svg class="abs" style="left:121.6px;top:138.4px" width="13.5" height="11" viewBox="0 0 13.5 11"><path d="M0.5 2 Q0.5 1 1.5 1 L4.6 1 L5.8 2.3 L10.4 2.3 Q11.2 2.3 11.2 3.2 L11.2 4.2 L0.5 4.2 Z" fill="#e89a2b"/><path d="M0.5 3.6 L0.5 9.8 Q0.5 10.6 1.4 10.6 L2 10.6 L3.6 4.6 L1.5 4.6 Z" fill="#f0a836"/><path d="M3.3 4.4 L13 4.4 L11.2 10 Q11 10.6 10.3 10.6 L1.2 10.6 Z" fill="#ffd65c"/></svg>
<div class="t b" style="left:140.0px;top:137.7px;font-size:13.00px;line-height:13.00px;color:#fff;transform:scaleX(0.8721)">Load STL / OBJ</div>
<div class="t" style="left:145.0px;top:166.1px;font-size:10.50px;line-height:10.50px;color:#555;transform:scaleX(0.9200)">3DBenchy.stl</div>
<div class="hr" style="top:188px"></div>
<div class="t b" style="left:26.2px;top:196.8px;font-size:11.50px;line-height:11.50px;color:#444;transform:scaleX(0.9247)">SCALE (MM)</div>
<svg class="abs" style="left:299.8px;top:198.4px" width="12" height="13.5" viewBox="0 0 12 13.5"><path d="M3.2 6.2 L3.2 4 Q3.2 1 6 1 Q8.8 1 8.8 4 L8.8 6.2" fill="none" stroke="#8f8f8f" stroke-width="1.6"/><rect x="1.2" y="5.8" width="9.6" height="7.4" rx="1.3" fill="#f2b01e"/><rect x="1.2" y="10.4" width="9.6" height="2.8" rx="1.3" fill="#e09a10"/></svg>
<div class="inp" style="left:26px;top:220px;width:93px;height:29px"><div class="spin"><svg width="18" height="100%" viewBox="0 0 18 17" preserveAspectRatio="none" style="position:absolute;left:0;top:0;height:100%"><path d="M5.5 6.5 L9 3 L12.5 6.5 M5.5 10.5 L9 14 L12.5 10.5" fill="none" stroke="#555" stroke-width="1.1"/></svg></div></div>
<div class="t" style="left:32.5px;top:228.5px;font-size:13.00px;line-height:13.00px;color:#222;transform:scaleX(0.8978)">333.01</div>
<div class="inp" style="left:127px;top:220px;width:92px;height:29px"><div class="spin"><svg width="18" height="100%" viewBox="0 0 18 17" preserveAspectRatio="none" style="position:absolute;left:0;top:0;height:100%"><path d="M5.5 6.5 L9 3 L12.5 6.5 M5.5 10.5 L9 14 L12.5 10.5" fill="none" stroke="#555" stroke-width="1.1"/></svg></div></div>
<div class="t" style="left:133.0px;top:228.5px;font-size:13.00px;line-height:13.00px;color:#222;transform:scaleX(0.9305)">266.40</div>
<div class="inp" style="left:227px;top:220px;width:93px;height:29px"><div class="spin"><svg width="18" height="100%" viewBox="0 0 18 17" preserveAspectRatio="none" style="position:absolute;left:0;top:0;height:100%"><path d="M5.5 6.5 L9 3 L12.5 6.5 M5.5 10.5 L9 14 L12.5 10.5" fill="none" stroke="#555" stroke-width="1.1"/></svg></div></div>
<div class="t" style="left:233.7px;top:228.5px;font-size:13.00px;line-height:13.00px;color:#222;transform:scaleX(0.9255)">172.07</div>
<div class="btn" style="left:26px;top:262px;width:294px;height:33px;background:#3c3c41"></div>
<div class="t b" style="left:143.0px;top:272.7px;font-size:13.00px;line-height:13.00px;color:#fff;transform:scaleX(0.9127)">Apply Size</div>
<div class="card" style="top:316px;height:123px"></div>
<div class="t b" style="left:26.0px;top:329.4px;font-size:11.50px;line-height:11.50px;color:#444;transform:scaleX(0.8949)">2. AUTO SLICE</div>
<div class="t" style="left:26.0px;top:350.7px;font-size:11.70px;line-height:11.70px;color:#555;transform:scaleX(0.9410)">Automatically rotates the model and calculates the</div>
<div class="t" style="left:26.0px;top:365.1px;font-size:11.70px;line-height:11.70px;color:#555;transform:scaleX(0.9560)">minimum cuts to fit the printer selected below.</div>
<div class="btn" style="left:26px;top:391px;width:294px;height:33px;background:#555"></div>
<svg class="abs" style="left:93.7px;top:400.7px" width="13.4" height="13.4" viewBox="0 0 13.4 13.4"><g transform="translate(6.7 6.7)" fill="#7fb4c8"><rect x="-1.15" y="-6.6" width="2.3" height="3" rx="0.4" transform="rotate(0)"/><rect x="-1.15" y="-6.6" width="2.3" height="3" rx="0.4" transform="rotate(45)"/><rect x="-1.15" y="-6.6" width="2.3" height="3" rx="0.4" transform="rotate(90)"/><rect x="-1.15" y="-6.6" width="2.3" height="3" rx="0.4" transform="rotate(135)"/><rect x="-1.15" y="-6.6" width="2.3" height="3" rx="0.4" transform="rotate(180)"/><rect x="-1.15" y="-6.6" width="2.3" height="3" rx="0.4" transform="rotate(225)"/><rect x="-1.15" y="-6.6" width="2.3" height="3" rx="0.4" transform="rotate(270)"/><rect x="-1.15" y="-6.6" width="2.3" height="3" rx="0.4" transform="rotate(315)"/><circle r="4.5"/><circle r="1.5" fill="#4a4a4a"/></g></svg>
<div class="t b" style="left:110.8px;top:400.8px;font-size:13.00px;line-height:13.00px;color:#fff;transform:scaleX(0.9610)">Auto Calculate &amp; Rotate</div>
<div class="card" style="top:449px;height:429px"></div>
<div class="t b" style="left:26.0px;top:462.3px;font-size:11.50px;line-height:11.50px;color:#444;transform:scaleX(0.8944)">3. SLICING SETUP</div>
<div class="t" style="left:26.0px;top:483.3px;font-size:11.50px;line-height:11.50px;color:#555;transform:scaleX(0.9217)">Printer Preset</div>
<div class="inp" style="left:26px;top:498px;width:294px;height:29px"></div><svg class="abs" style="left:305px;top:509.5px" width="10" height="7" viewBox="0 0 10 7"><path d="M1 1 L5 5.2 L9 1" fill="none" stroke="#222" stroke-width="1.5"/></svg>
<div class="t" style="left:32.4px;top:506.0px;font-size:13.00px;line-height:13.00px;color:#222;transform:scaleX(0.9429)">Bambu A1 (256×256×256)</div>
<div class="t" style="left:26.0px;top:543.1px;font-size:11.50px;line-height:11.50px;color:#555;transform:scaleX(0.9126)">Cut Axes</div>
<div class="t" style="left:177.4px;top:538.9px;font-size:11.50px;line-height:11.50px;color:#555;transform:scaleX(0.9041)">Parts/Axis</div>
<div class="cb on" style="left:30px;top:561px"><svg width="14" height="14" viewBox="0 0 14 14" style="position:absolute;left:0;top:0"><path d="M3 7.2 L5.8 10 L11 4" fill="none" stroke="#fff" stroke-width="1.9"/></svg></div>
<div class="t" style="left:50.2px;top:564.9px;font-size:10.00px;line-height:10.00px;color:#555;transform:scaleX(0.9295)">X</div>
<div class="cb off" style="left:67px;top:561px"></div>
<div class="t" style="left:86.6px;top:564.9px;font-size:10.00px;line-height:10.00px;color:#555;transform:scaleX(0.8545)">Y</div>
<div class="cb on" style="left:103px;top:561px"><svg width="14" height="14" viewBox="0 0 14 14" style="position:absolute;left:0;top:0"><path d="M3 7.2 L5.8 10 L11 4" fill="none" stroke="#fff" stroke-width="1.9"/></svg></div>
<div class="t" style="left:123.0px;top:564.9px;font-size:10.00px;line-height:10.00px;color:#555;transform:scaleX(0.8840)">Z</div>
<div class="inp" style="left:177px;top:554px;width:143px;height:28px"><div class="spin"><svg width="18" height="100%" viewBox="0 0 18 17" preserveAspectRatio="none" style="position:absolute;left:0;top:0;height:100%"><path d="M5.5 6.5 L9 3 L12.5 6.5 M5.5 10.5 L9 14 L12.5 10.5" fill="none" stroke="#555" stroke-width="1.1"/></svg></div></div>
<div class="t" style="left:183.3px;top:561.9px;font-size:13.00px;line-height:13.00px;color:#222;transform:scaleX(0.8298)">2</div>
<div class="t" style="left:26.0px;top:592.9px;font-size:11.50px;line-height:11.50px;color:#555;transform:scaleX(0.9689)">Cut Method</div>
<div class="inp" style="left:26px;top:608px;width:294px;height:29px"></div><svg class="abs" style="left:305px;top:619.5px" width="10" height="7" viewBox="0 0 10 7"><path d="M1 1 L5 5.2 L9 1" fill="none" stroke="#222" stroke-width="1.5"/></svg>
<div class="t" style="left:32.2px;top:616.1px;font-size:13.00px;line-height:13.00px;color:#222;transform:scaleX(0.9492)">Puzzle / Dovetail</div>
<div class="dark" style="top:645px;height:58px"></div>
<div class="t" style="left:32.2px;top:653.4px;font-size:11.50px;line-height:11.50px;color:#4f4f4f;transform:scaleX(0.8990)">Puzzle Size (mm)</div>
<div class="inp" style="left:32px;top:668px;width:282px;height:29px"><div class="spin"><svg width="18" height="100%" viewBox="0 0 18 17" preserveAspectRatio="none" style="position:absolute;left:0;top:0;height:100%"><path d="M5.5 6.5 L9 3 L12.5 6.5 M5.5 10.5 L9 14 L12.5 10.5" fill="none" stroke="#555" stroke-width="1.1"/></svg></div></div>
<div class="t" style="left:38.5px;top:676.2px;font-size:13.00px;line-height:13.00px;color:#222;transform:scaleX(0.8644)">16</div>
<div class="hr" style="top:713px"></div>
<div class="cb on" style="left:30px;top:725px"><svg width="14" height="14" viewBox="0 0 14 14" style="position:absolute;left:0;top:0"><path d="M3 7.2 L5.8 10 L11 4" fill="none" stroke="#fff" stroke-width="1.9"/></svg></div>
<div class="t" style="left:52.4px;top:727.2px;font-size:11.50px;line-height:11.50px;color:#555;transform:scaleX(0.9309)">Enable Alignment Pegs</div>
<div class="dark" style="top:747px;height:120px"></div>
<div class="t" style="left:32.2px;top:755.0px;font-size:11.50px;line-height:11.50px;color:#4f4f4f;transform:scaleX(0.8811)">Shape</div>
<div class="t" style="left:177.5px;top:755.0px;font-size:11.50px;line-height:11.50px;color:#4f4f4f;transform:scaleX(0.8934)">Size (mm)</div>
<div class="inp" style="left:32px;top:770px;width:137px;height:29px"></div><svg class="abs" style="left:154px;top:781.5px" width="10" height="7" viewBox="0 0 10 7"><path d="M1 1 L5 5.2 L9 1" fill="none" stroke="#222" stroke-width="1.5"/></svg>
<div class="t" style="left:38.3px;top:777.6px;font-size:13.00px;line-height:13.00px;color:#222;transform:scaleX(0.9231)">Square</div>
<div class="inp" style="left:177px;top:770px;width:137px;height:29px"><div class="spin"><svg width="18" height="100%" viewBox="0 0 18 17" preserveAspectRatio="none" style="position:absolute;left:0;top:0;height:100%"><path d="M5.5 6.5 L9 3 L12.5 6.5 M5.5 10.5 L9 14 L12.5 10.5" fill="none" stroke="#555" stroke-width="1.1"/></svg></div></div>
<div class="t" style="left:183.3px;top:777.6px;font-size:13.00px;line-height:13.00px;color:#222;transform:scaleX(0.8575)">2</div>
<div class="t" style="left:32.2px;top:809.5px;font-size:11.50px;line-height:11.50px;color:#4f4f4f;transform:scaleX(0.9522)">Depth (mm)</div>
<div class="inp" style="left:32px;top:824px;width:282px;height:29px"><div class="spin"><svg width="18" height="100%" viewBox="0 0 18 17" preserveAspectRatio="none" style="position:absolute;left:0;top:0;height:100%"><path d="M5.5 6.5 L9 3 L12.5 6.5 M5.5 10.5 L9 14 L12.5 10.5" fill="none" stroke="#555" stroke-width="1.1"/></svg></div></div>
<div class="t" style="left:38.5px;top:831.9px;font-size:13.00px;line-height:13.00px;color:#222;transform:scaleX(0.8644)">10</div>
<div class="card" style="top:888px;height:199px"></div>
<div class="t b" style="left:26.2px;top:901.6px;font-size:11.50px;line-height:11.50px;color:#444;transform:scaleX(0.8562)">4. PROCESS</div>
<div class="btn" style="left:26px;top:925px;width:294px;height:33px;background:#0078d0"></div>
<svg class="abs" style="left:116.9px;top:934.6px" width="13" height="13.5" viewBox="0 0 13 13.5"><path d="M3.6 4.6 L9.2 12.4 M9.4 4.6 L3.8 12.4" stroke="#a9c9d0" stroke-width="1.5" stroke-linecap="round"/><ellipse cx="2.6" cy="2.7" rx="1.5" ry="2" fill="none" stroke="#d84a3a" stroke-width="1.3" transform="rotate(-25 2.6 2.7)"/><ellipse cx="10.4" cy="2.7" rx="1.5" ry="2" fill="none" stroke="#d84a3a" stroke-width="1.3" transform="rotate(25 10.4 2.7)"/></svg>
<div class="t b" style="left:133.8px;top:935.1px;font-size:13.00px;line-height:13.00px;color:#fff;transform:scaleX(0.8809)">SLICE MODEL (S)</div>
<div class="btn" style="left:26px;top:963px;width:294px;height:33px;background:#28a745"></div>
<svg class="abs" style="left:111.2px;top:972.5px" width="12.5" height="13.8" viewBox="0 0 12.5 13.8"><path d="M0.3 0.3 L10.5 0.3 L12.2 2 L12.2 13.4 L0.3 13.4 Z" fill="#5c5c5c"/><rect x="3.2" y="0.5" width="6.6" height="4.8" fill="#d8d8d8"/><rect x="6.9" y="1" width="1.5" height="3.6" fill="#3a3a3a"/><rect x="1.6" y="7.2" width="9.2" height="5.2" fill="#fff"/><rect x="1.6" y="12.4" width="9.2" height="1.2" fill="#1e88c8"/></svg>
<div class="t b" style="left:127.8px;top:973.1px;font-size:13.00px;line-height:13.00px;color:#fff;transform:scaleX(0.9524)">Download All (ZIP)</div>
<div class="btn" style="left:26px;top:1001px;width:141px;height:37px;background:#555"></div>
<svg class="abs" style="left:73.5px;top:1013px" width="11.5" height="11" viewBox="0 0 11.5 11"><g transform="translate(11.5 0) scale(-1 1)"><path d="M0.3 9.6 C0.3 6.4 2.4 4.6 6.2 4.6 L6.2 2.2 L11.2 5.6 L6.2 9 L6.2 6.9 C3.8 6.9 2 7.6 0.3 9.6 Z" fill="#fff"/></g></svg>
<div class="t b" style="left:88.5px;top:1011.1px;font-size:13.00px;line-height:13.00px;color:#fff;transform:scaleX(0.9424)">Undo</div>
<div class="btn" style="left:179px;top:1001px;width:141px;height:37px;background:#555"></div>
<svg class="abs" style="left:227.1px;top:1013px" width="11.5" height="11" viewBox="0 0 11.5 11"><g><path d="M0.3 9.6 C0.3 6.4 2.4 4.6 6.2 4.6 L6.2 2.2 L11.2 5.6 L6.2 9 L6.2 6.9 C3.8 6.9 2 7.6 0.3 9.6 Z" fill="#fff"/></g></svg>
<div class="t b" style="left:242.1px;top:1011.1px;font-size:13.00px;line-height:13.00px;color:#fff;transform:scaleX(0.9138)">Redo</div>
<div class="btn" style="left:26px;top:1043px;width:294px;height:33px;background:#a83232"></div>
<div class="t b" style="left:132.9px;top:1053.0px;font-size:13.00px;line-height:13.00px;color:#fff;transform:scaleX(0.9013)">Reset Session</div>
<div class="card" style="top:1097px;height:210px"></div>
<div class="t b" style="left:26.2px;top:1110.5px;font-size:11.50px;line-height:11.50px;color:#444;transform:scaleX(0.9174)">CONTROLS &amp; THEME</div>
<div class="t b" style="left:51.4px;top:1131.6px;font-size:11.50px;line-height:11.50px;color:#0a78cc;transform:scaleX(0.8992)">LMB</div>
<div class="t" style="left:84.3px;top:1131.6px;font-size:11.50px;line-height:11.50px;color:#555;transform:scaleX(0.9061)">Rotate Cam</div>
<div class="t b" style="left:49.8px;top:1150.4px;font-size:11.50px;line-height:11.50px;color:#0a78cc;transform:scaleX(0.9164)">RMB</div>
<div class="t" style="left:84.3px;top:1150.4px;font-size:11.50px;line-height:11.50px;color:#555;transform:scaleX(0.8454)">Pan</div>
<div class="t b" style="left:45.7px;top:1169.2px;font-size:11.50px;line-height:11.50px;color:#0a78cc;transform:scaleX(0.8793)">Scroll</div>
<div class="t" style="left:84.3px;top:1169.2px;font-size:11.50px;line-height:11.50px;color:#555;transform:scaleX(0.9457)">Zoom</div>
<div class="t b" style="left:26.2px;top:1188.1px;font-size:11.50px;line-height:11.50px;color:#0a78cc;transform:scaleX(0.9866)">Alt+Drag</div>
<div class="t" style="left:84.3px;top:1188.1px;font-size:11.50px;line-height:11.50px;color:#555;transform:scaleX(0.9532)">Rotate Model</div>
<div class="t b" style="left:68.0px;top:1206.9px;font-size:11.50px;line-height:11.50px;color:#0a78cc;transform:scaleX(0.7561)">S</div>
<div class="t" style="left:84.3px;top:1206.9px;font-size:11.50px;line-height:11.50px;color:#555;transform:scaleX(0.8705)">Slice</div>
<div class="t b" style="left:68.7px;top:1225.8px;font-size:11.50px;line-height:11.50px;color:#0a78cc;transform:scaleX(0.6649)">E</div>
<div class="t" style="left:84.3px;top:1225.8px;font-size:11.50px;line-height:11.50px;color:#555;transform:scaleX(0.9298)">Explode View</div>
<div class="btn" style="left:26px;top:1249px;width:294px;height:33px;background:#3c3c41"></div>
<div class="t b" style="left:107.6px;top:1259.3px;font-size:13.00px;line-height:13.00px;color:#fff;transform:scaleX(0.9624)">Switch to Dark Theme</div></div></body></html>
